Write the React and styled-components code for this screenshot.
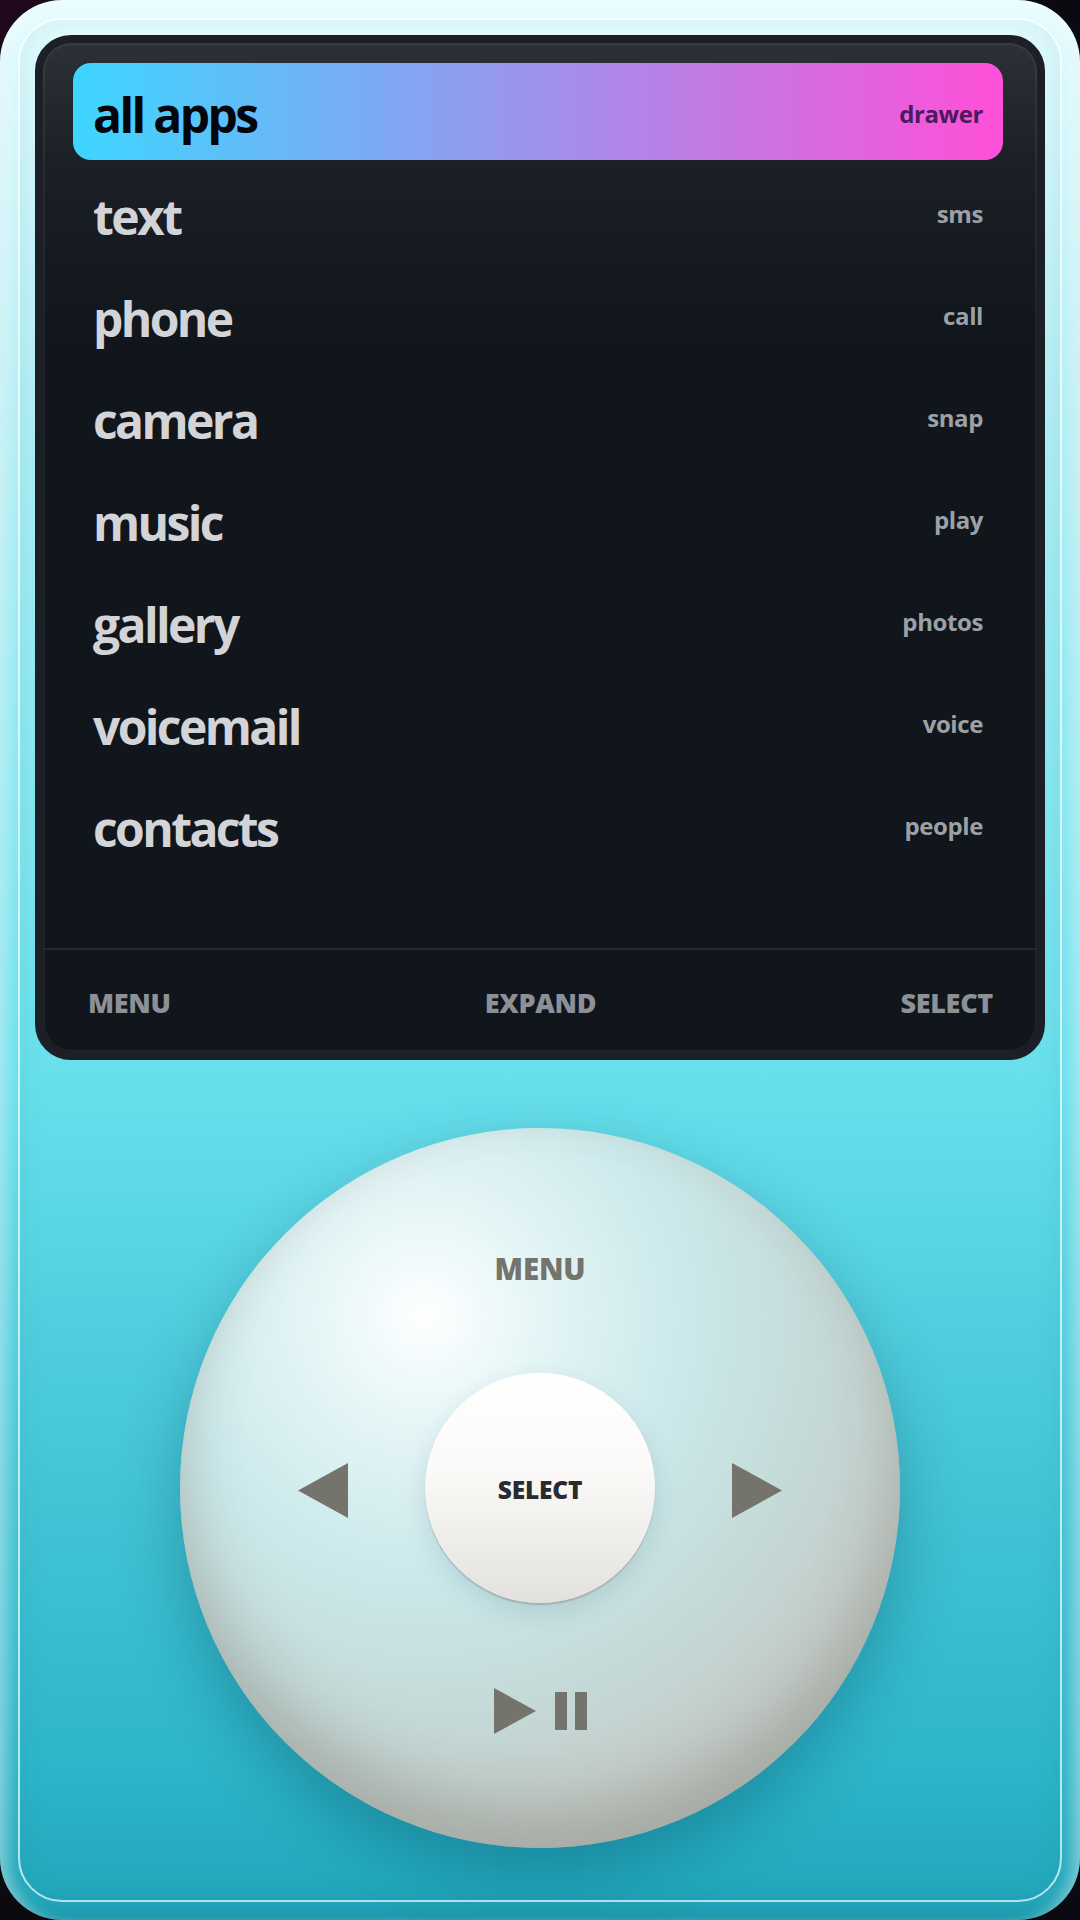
import React from 'react';
import styled, { createGlobalStyle } from 'styled-components';

const GlobalStyle = createGlobalStyle`
  html, body {
    margin: 0;
    padding: 0;
    background: #0a0a10;
  }
  * {
    box-sizing: border-box;
  }
`;

const Page = styled.div`
  width: 1080px;
  height: 1920px;
  background: radial-gradient(circle at 0 0, #22081f 0, #0b0a10 9%, #0a0a10 100%);
  font-family: "Open Sans", "Noto Sans", sans-serif;
  font-weight: 700;
`;

const Shell = styled.div`
  position: relative;
  width: 1080px;
  height: 1920px;
  padding: 35px;
  display: flex;
  flex-direction: column;
  border-radius: 62px;
  background: linear-gradient(180deg, #eafdff 0, #dcf9fd 3%, #b6eff5 20%, #8ae8f1 40%, #68e0ec 56%, #4ccbdb 72%, #2db5c9 92%, #20a5b9 100%);
  box-shadow:
    inset 16px 0 14px -8px rgba(255, 255, 255, 0.42),
    inset -16px 0 14px -8px rgba(255, 255, 255, 0.42),
    inset 0 -14px 18px -8px rgba(0, 60, 80, 0.18);

  &::before {
    content: '';
    position: absolute;
    inset: 18px;
    border: 2px solid rgba(255, 255, 255, 0.68);
    border-radius: 44px;
    box-shadow: inset 0 0 26px rgba(0, 110, 140, 0.1);
    pointer-events: none;
  }
`;

const Screen = styled.section`
  position: relative;
  height: 1025px;
  flex: none;
  display: flex;
  flex-direction: column;
  border: 8px solid #1c2026;
  border-radius: 36px;
  overflow: hidden;
  box-shadow: inset 0 0 0 2px rgba(255, 255, 255, 0.06);
  background: linear-gradient(180deg, #2c3037 0, #1b2027 12%, #161a21 20%, #11161d 30%, #11161d 100%);
`;

const List = styled.ul`
  flex: 1;
  margin: 0;
  padding: 20px 34px 0 30px;
  list-style: none;
  display: flex;
  flex-direction: column;
  gap: 5px;
`;

const Row = styled.li`
  height: 97px;
  padding: 0 20px;
  display: flex;
  align-items: center;
  justify-content: space-between;
  border-radius: 18px;
  color: ${({ $active }) => ($active ? '#04060c' : '#d2d4d8')};
  background: ${({ $active }) =>
    $active ? 'linear-gradient(90deg, #3dd6ff 0%, #ff4fd8 100%)' : 'transparent'};
`;

const AppName = styled.span`
  padding-top: 6px;
  font-size: 48px;
  line-height: 1;
  letter-spacing: -2.6px;
`;

const Hint = styled.span`
  padding-top: ${({ $active }) => ($active ? '5px' : '1px')};
  font-size: 24px;
  line-height: 1;
  letter-spacing: -0.4px;
  color: ${({ $active }) => ($active ? '#4a1a5c' : '#9da1a6')};
`;

const Footer = styled.footer`
  height: 104px;
  flex: none;
  padding: 2px 44px 0 45px;
  display: grid;
  grid-template-columns: 1fr auto 1fr;
  align-items: center;
  border-top: 2px solid #252930;
  color: #8d9096;
  font-size: 27px;
  font-weight: 800;
  letter-spacing: -0.3px;

  span:last-child {
    justify-self: end;
  }
`;

const Deck = styled.div`
  flex: 1;
  display: flex;
  align-items: center;
  justify-content: center;
  padding-top: 30px;
`;

const Wheel = styled.div`
  width: 720px;
  height: 720px;
  padding: 34px 41px;
  display: grid;
  grid-template-columns: 1fr 230px 1fr;
  grid-template-rows: 1fr 230px 1fr;
  place-items: center;
  border-radius: 50%;
  color: #74736c;
  background: radial-gradient(circle at 34% 26%, #ffffff 0, #e9f7f8 13%, #cbe9eb 36%, #c4d8d6 58%, #c4ccc8 72%, #b6b8b4 100%);
  box-shadow:
    0 26px 64px rgba(0, 60, 80, 0.32),
    inset 0 -40px 60px rgba(110, 110, 100, 0.32),
    inset 0 0 30px rgba(205, 205, 195, 0.22);
`;

const WheelLabel = styled.span`
  padding-top: 2px;
  grid-column: 2;
  grid-row: ${({ $row }) => $row};
  font-size: 29.5px;
  font-weight: 800;
  letter-spacing: -0.2px;
`;

const WheelIcon = styled.span`
  padding-top: 6px;
  display: flex;
  align-items: center;
  justify-content: center;
  gap: 19px;
  grid-column: ${({ $col }) => $col};
  grid-row: ${({ $row }) => $row};
`;

const Triangle = styled.svg`
  display: block;
  fill: currentColor;
`;

const SelectButton = styled.button`
  grid-column: 2;
  grid-row: 2;
  width: 230px;
  height: 230px;
  padding: 3px 0 0;
  border: 0;
  border-radius: 50%;
  font-family: inherit;
  font-weight: 800;
  font-size: 24.5px;
  letter-spacing: -0.2px;
  color: #2a2b2e;
  background: linear-gradient(180deg, #ffffff 0, #fbfaf8 42%, #e9e8e5 85%, #e2e1de 100%);
  box-shadow:
    0 2px 1px rgba(150, 150, 145, 0.55),
    0 10px 26px rgba(0, 60, 80, 0.12);
`;

const rows = [
  ['all apps', 'drawer'],
  ['text', 'sms'],
  ['phone', 'call'],
  ['camera', 'snap'],
  ['music', 'play'],
  ['gallery', 'photos'],
  ['voicemail', 'voice'],
  ['contacts', 'people'],
];

export default function App() {
  return (
    <Page>
      <GlobalStyle />
      <Shell>
        <Screen>
          <List>
            {rows.map(([name, hint], i) => (
              <Row key={name} $active={i === 0}>
                <AppName>{name}</AppName>
                <Hint $active={i === 0}>{hint}</Hint>
              </Row>
            ))}
          </List>
          <Footer>
            <span>MENU</span>
            <span>EXPAND</span>
            <span>SELECT</span>
          </Footer>
        </Screen>
        <Deck>
          <Wheel>
            <WheelLabel $row={1}>MENU</WheelLabel>
            <WheelIcon $col={1} $row={2}>
              <Triangle width="50" height="55" viewBox="0 0 50 55">
                <path d="M50 0V55L0 27.5Z" />
              </Triangle>
            </WheelIcon>
            <SelectButton>SELECT</SelectButton>
            <WheelIcon $col={3} $row={2}>
              <Triangle width="50" height="55" viewBox="0 0 50 55">
                <path d="M0 0V55L50 27.5Z" />
              </Triangle>
            </WheelIcon>
            <WheelIcon $col={2} $row={3}>
              <Triangle width="42" height="46" viewBox="0 0 42 46">
                <path d="M0 0V46L42 23Z" />
              </Triangle>
              <Triangle width="32" height="38" viewBox="0 0 32 38">
                <path d="M0 0H12V38H0ZM20 0H32V38H20Z" />
              </Triangle>
            </WheelIcon>
          </Wheel>
        </Deck>
      </Shell>
    </Page>
  );
}
